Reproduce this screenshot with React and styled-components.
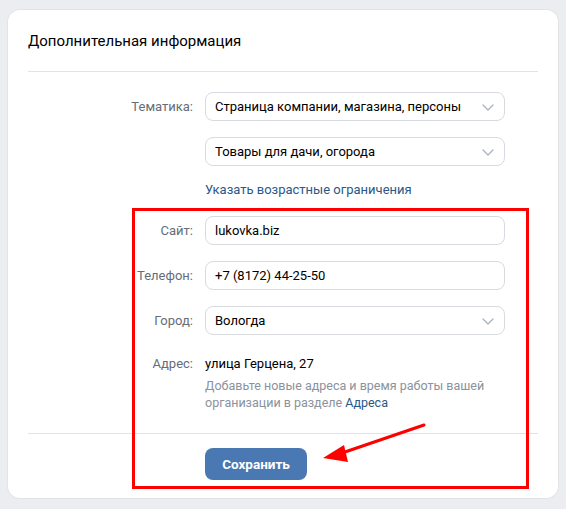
import React from "react";
import styled, { createGlobalStyle } from "styled-components";

const GlobalStyle = createGlobalStyle`
  html, body {
    margin: 0;
    padding: 0;
    background: #ebedf0;
    font-family: Roboto, "Liberation Sans", Arial, sans-serif;
    -webkit-font-smoothing: antialiased;
  }
  body {
    padding: 10px 8px 9px;
  }
`;

const Card = styled.div`
  position: relative;
  width: 550px;
  background: #fff;
  border-radius: 12px;
  box-shadow: 0 0 0 1px #e3e4e8;
`;

const Header = styled.div`
  margin: 0 20px;
  padding: 22px 0 20px;
  border-bottom: 1px solid #e1e3e6;
  font-size: 15px;
  line-height: 19px;
  color: #000;
`;

const Form = styled.div`
  padding: 20px 20px 22px;
  display: flex;
  flex-direction: column;
`;

const Row = styled.div`
  display: grid;
  grid-template-columns: 165px 300px;
  column-gap: 12px;
  align-items: ${(p) => (p.$top ? "start" : "center")};
  margin-top: ${(p) => p.$gap ?? 16}px;
  &:first-child {
    margin-top: 0;
  }
`;

const Label = styled.div`
  text-align: right;
  font-size: 13px;
  line-height: 18px;
  color: #656d77;
`;

const Field = styled.div`
  position: relative;
  box-sizing: border-box;
  height: 29px;
  border: 1px solid #d7dbe0;
  border-radius: 8px;
  padding: 0 30px 0 9px;
  display: flex;
  align-items: center;
  font-size: 13px;
  color: #000;
  background: #fff;
`;

const Chevron = styled.svg`
  position: absolute;
  right: 10px;
  top: 50%;
  margin-top: -3px;
`;

const Link = styled.a`
  font-size: inherit;
  line-height: 18px;
  color: #2a5885;
  text-decoration: none;
  cursor: pointer;
`;

const LinkLine = styled.div`
  font-size: 13px;
  line-height: 18px;
`;

const Value = styled.div`
  font-size: 13px;
  line-height: 18px;
  color: #000;
`;

const Hint = styled.div`
  margin-top: 4px;
  font-size: 12.5px;
  line-height: 17px;
  color: #8a929c;
  ${Link} {
    line-height: 17px;
  }
`;

const Footer = styled.div`
  margin: 0 20px;
  padding: 14px 0 18px;
  border-top: 1px solid #e1e3e6;
  display: grid;
  grid-template-columns: 165px auto;
  column-gap: 12px;
`;

const Button = styled.button`
  grid-column: 2;
  justify-self: start;
  width: 102px;
  height: 32px;
  border: none;
  border-radius: 8px;
  background: #4a78b2;
  color: #fff;
  font-family: Roboto, "Liberation Sans", Arial, sans-serif;
  font-size: 13.5px;
  font-weight: 700;
  cursor: pointer;
`;

const Highlight = styled.div`
  position: absolute;
  left: 124px;
  top: 198px;
  width: 397px;
  height: 281px;
  box-sizing: border-box;
  border: 3px solid #ff0000;
  pointer-events: none;
`;

const Arrow = styled.svg`
  position: absolute;
  left: 0;
  top: 0;
  pointer-events: none;
`;

function Select({ children }) {
  return (
    <Field>
      {children}
      <Chevron width="12" height="7" viewBox="0 0 12 7">
        <path d="M1 1l5 5 5-5" fill="none" stroke="#aab2bd" strokeWidth="1.3" strokeLinecap="round" strokeLinejoin="round" />
      </Chevron>
    </Field>
  );
}

export default function App() {
  return (
    <>
      <GlobalStyle />
      <Card>
        <Header>Дополнительная информация</Header>
        <Form>
          <Row>
            <Label>Тематика:</Label>
            <Select>Страница компании, магазина, персоны</Select>
          </Row>
          <Row>
            <div />
            <Select>Товары для дачи, огорода</Select>
          </Row>
          <Row $gap={15}>
            <div />
            <LinkLine>
              <Link>Указать возрастные ограничения</Link>
            </LinkLine>
          </Row>
          <Row $gap={17}>
            <Label>Сайт:</Label>
            <Field>lukovka.biz</Field>
          </Row>
          <Row>
            <Label>Телефон:</Label>
            <Field>+7 (8172) 44-25-50</Field>
          </Row>
          <Row>
            <Label>Город:</Label>
            <Select>Вологда</Select>
          </Row>
          <Row $gap={20} $top>
            <Label>Адрес:</Label>
            <div>
              <Value>улица Герцена, 27</Value>
              <Hint>
                Добавьте новые адреса и время работы вашей организации в разделе{" "}
                <Link>Адреса</Link>
              </Hint>
            </div>
          </Row>
        </Form>
        <Footer>
          <Button>Сохранить</Button>
        </Footer>
        <Highlight />
        <Arrow width="550" height="490" viewBox="0 0 550 490">
          <line x1="416" y1="415" x2="334" y2="443" stroke="#ff0000" strokeWidth="3" strokeLinecap="round" />
          <polygon points="315,448 336,435 340,452" fill="#ff0000" />
        </Arrow>
      </Card>
    </>
  );
}
